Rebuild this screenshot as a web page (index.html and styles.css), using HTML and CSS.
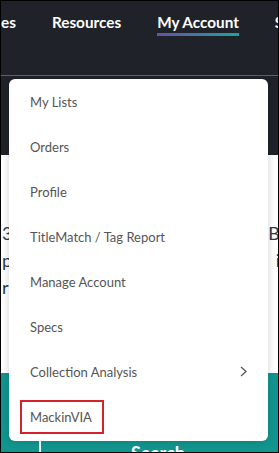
FILE: index.html
```html
<!DOCTYPE html>
<html lang="en">
<head>
  <meta charset="UTF-8" />
  <meta name="viewport" content="width=device-width, initial-scale=1.0">
  <title>My Account</title>
  <link rel="stylesheet" href="styles.css">
</head>
<body>
  <div class="frame">
    <div class="header">
      <nav class="nav">
        <a class="nav-link">es</a>
        <a class="nav-link">Resources</a>
        <a class="nav-link active">My Account</a>
        <a class="nav-link">S</a>
      </nav>
      <div class="subbar"></div>
    </div>

    <div class="content">
      <div class="text-row"><span>3</span><span class="right-word">Bo</span></div>
      <div class="text-row"><span>p</span><span class="right-word">in</span></div>
      <div class="text-row"><span>r</span><span></span></div>
    </div>

    <div class="teal-band">
      <div class="band-divider"></div>
      <div class="band-title">Search</div>
    </div>

    <ul class="dropdown">
      <li>My Lists</li>
      <li>Orders</li>
      <li>Profile</li>
      <li>TitleMatch / Tag Report</li>
      <li>Manage Account</li>
      <li>Specs</li>
      <li class="has-sub">
        Collection Analysis
        <svg class="chevron" width="7" height="11" viewBox="0 0 7 11">
          <polyline points="1,1 6,5.5 1,10" fill="none" stroke="#555" stroke-width="1.3" />
        </svg>
      </li>
      <li><span class="highlight">MackinVIA</span></li>
    </ul>
  </div>
</body>
</html>
```

FILE: styles.css
```css
body {
  margin: 0;
  font-family: Lato, "Open Sans", sans-serif;
  background: #fff;
}
.frame {
  position: relative;
  width: 279px;
  height: 453px;
  box-sizing: border-box;
  border: 1px solid #000;
  overflow: hidden;
  display: flex;
  flex-direction: column;
}
.header {
  flex-shrink: 0;
  background-color: #1f2329;
}
.nav {
  display: flex;
  gap: 36px;
  height: 74px;
  border-bottom: 1px solid #5d6168;
  white-space: nowrap;
}
.nav-link {
  color: #fff;
  font-weight: bold;
  font-size: 15.3px;
  padding-top: 10px;
  height: 22px;
  line-height: 22px;
  border-bottom: 3px solid transparent;
}
.nav-link.active {
  border-image: linear-gradient(to right, #6a4ea6, #1ba59f) 1;
}
.subbar {
  height: 79px;
}
.content {
  flex-shrink: 0;
  height: 218px;
  padding-top: 65px;
  box-sizing: border-box;
  background: #fff;
}
.text-row {
  display: flex;
  justify-content: space-between;
  font-size: 18px;
  line-height: 27px;
  color: #2e3a4b;
  padding-left: 1px;
}
.right-word {
  margin-right: -12px;
}
.teal-band {
  flex-shrink: 0;
  height: 79px;
  overflow: hidden;
  background-color: #12958f;
  display: flex;
  align-items: flex-start;
  padding-top: 68px;
  box-sizing: border-box;
}
.band-divider {
  width: 2px;
  height: 20px;
  background: #fff;
  margin-left: 38px;
}
.band-title {
  color: #fff;
  font-weight: bold;
  font-size: 18px;
  line-height: 22px;
  margin-left: 90px;
  margin-top: 1px;
}
.dropdown {
  position: absolute;
  top: 78px;
  left: 8px;
  width: 259px;
  margin: 0;
  padding: 0 0 2px;
  list-style: none;
  background: #fff;
  border-radius: 6px;
  box-shadow: 0 0 8px rgba(0,0,0,0.18);
}
.dropdown li {
  display: flex;
  align-items: center;
  height: 45px;
  padding-left: 21px;
  font-size: 13px;
  color: #555;
}
.dropdown .has-sub {
  justify-content: space-between;
  padding-right: 21px;
}
.highlight {
  border: 2px solid #d3222a;
  padding: 7px 10px 7px 8px;
  margin-left: -10px;
}
```
